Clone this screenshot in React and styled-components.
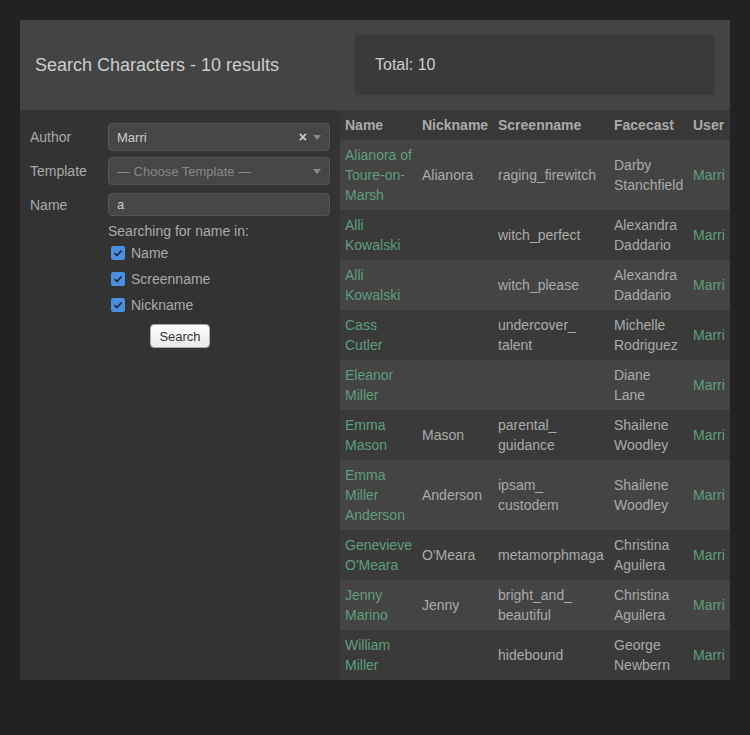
import React from 'react';
import styled, { createGlobalStyle } from 'styled-components';

const GlobalStyle = createGlobalStyle`
  body {
    margin: 0;
    background-color: #222;
    font-family: 'Liberation Sans', Arial, sans-serif;
  }
`;

const characters = [
  { name: 'Alianora of Toure-on-Marsh', nick: 'Alianora', screen: 'raging_firewitch', face: 'Darby Stanchfield' },
  { name: 'Alli Kowalski', nick: '', screen: 'witch_perfect', face: 'Alexandra Daddario' },
  { name: 'Alli Kowalski', nick: '', screen: 'witch_please', face: 'Alexandra Daddario' },
  { name: 'Cass Cutler', nick: '', screen: 'undercover_ talent', face: 'Michelle Rodriguez' },
  { name: 'Eleanor Miller', nick: '', screen: '', face: 'Diane Lane' },
  { name: 'Emma Mason', nick: 'Mason', screen: 'parental_ guidance', face: 'Shailene Woodley' },
  { name: 'Emma Miller Anderson', nick: 'Anderson', screen: 'ipsam_ custodem', face: 'Shailene Woodley' },
  { name: 'Genevieve O\'Meara', nick: 'O\'Meara', screen: 'metamorphmaga', face: 'Christina Aguilera' },
  { name: 'Jenny Marino', nick: 'Jenny', screen: 'bright_and_ beautiful', face: 'Christina Aguilera' },
  { name: 'William Miller', nick: '', screen: 'hidebound', face: 'George Newbern' },
];

const CheckIcon = () => (
  <svg width='10' height='10' viewBox='0 0 10 10'>
    <path d='M1.5 5.2 L4 7.5 L8.5 2.5' fill='none' stroke='#1f2a3a' strokeWidth='1.8' />
  </svg>
);

const App = () => {
  return (
    <>
      <GlobalStyle />
      <Page>
        <Header>
          <Title>Search Characters - 10 results</Title>
          <TotalBox>Total: 10</TotalBox>
        </Header>
        <Body>
          <Sidebar>
            <FormRow>
              <Label>Author</Label>
              <Select>
                <span>Marri</span>
                <SelectIcons>
                  <Clear>×</Clear>
                  <Arrow />
                </SelectIcons>
              </Select>
            </FormRow>
            <FormRow>
              <Label>Template</Label>
              <Select placeholder>
                <span>— Choose Template —</span>
                <SelectIcons>
                  <Arrow />
                </SelectIcons>
              </Select>
            </FormRow>
            <FormRow>
              <Label>Name</Label>
              <Input>a</Input>
            </FormRow>
            <Options>
              <Hint>Searching for name in:</Hint>
              {['Name', 'Screenname', 'Nickname'].map((opt) => (
                <CheckRow key={opt}>
                  <Check>
                    <CheckIcon />
                  </Check>
                  {opt}
                </CheckRow>
              ))}
            </Options>
            <ButtonRow>
              <Button>Search</Button>
            </ButtonRow>
          </Sidebar>
          <Table>
            <colgroup>
              <col style={{ width: 77 }} />
              <col style={{ width: 76 }} />
              <col style={{ width: 116 }} />
              <col style={{ width: 79 }} />
              <col style={{ width: 42 }} />
            </colgroup>
            <thead>
              <tr>
                <Th>Name</Th>
                <Th>Nickname</Th>
                <Th>Screenname</Th>
                <Th>Facecast</Th>
                <Th>User</Th>
              </tr>
            </thead>
            <tbody>
              {characters.map((c, i) => (
                <Row key={i} odd={i % 2 === 0}>
                  <Td link>{c.name}</Td>
                  <Td>{c.nick}</Td>
                  <Td>{c.screen}</Td>
                  <Td>{c.face}</Td>
                  <Td link>Marri</Td>
                </Row>
              ))}
            </tbody>
          </Table>
        </Body>
      </Page>
    </>
  );
};

const Page = styled.div`
  width: 710px;
  margin: 20px;
  background-color: #333;
`;

const Header = styled.div`
  display: flex;
  align-items: center;
  justify-content: space-between;
  height: 90px;
  padding: 0 15px;
  background-color: #444;
`;

const Title = styled.h1`
  margin: 0;
  font-size: 18px;
  font-weight: 400;
  color: #ccc;
`;

const TotalBox = styled.div`
  box-sizing: border-box;
  width: 360px;
  height: 60px;
  display: flex;
  align-items: center;
  padding: 0 20px;
  background-color: #3a3a3a;
  color: #ccc;
  font-size: 16px;
`;

const Body = styled.div`
  display: flex;
  align-items: flex-start;
`;

const Sidebar = styled.div`
  box-sizing: border-box;
  width: 320px;
  padding: 13px 10px 0 10px;
  align-self: stretch;
  background-color: #333;
`;

const FormRow = styled.div`
  display: flex;
  align-items: center;
  margin-bottom: 6px;
  &:nth-child(2) {
    margin-bottom: 8px;
  }
`;

const Label = styled.div`
  width: 78px;
  font-size: 14px;
  color: #aaa;
`;

const Select = styled.div`
  box-sizing: border-box;
  flex: 1;
  height: 28px;
  display: flex;
  align-items: center;
  justify-content: space-between;
  padding: 0 8px;
  border: 1px solid #555;
  border-radius: 4px;
  background-color: #464646;
  font-size: 13px;
  color: ${(props) => (props.placeholder ? '#888' : '#ccc')};
`;

const SelectIcons = styled.div`
  display: flex;
  align-items: center;
  gap: 6px;
`;

const Clear = styled.span`
  font-size: 14px;
  font-weight: 700;
  color: #ccc;
  line-height: 1;
`;

const Arrow = styled.span`
  width: 0;
  height: 0;
  border-left: 4px solid transparent;
  border-right: 4px solid transparent;
  border-top: 5px solid #888;
`;

const Input = styled.div`
  box-sizing: border-box;
  flex: 1;
  height: 23px;
  display: flex;
  align-items: center;
  padding: 0 8px;
  border: 1px solid #555;
  border-radius: 4px;
  background-color: #464646;
  font-size: 13px;
  color: #ccc;
`;

const Options = styled.div`
  margin-left: 78px;
  margin-top: 7px;
`;

const Hint = styled.div`
  font-size: 14px;
  color: #aaa;
  line-height: 16px;
  margin-bottom: 1px;
`;

const CheckRow = styled.div`
  display: flex;
  align-items: center;
  gap: 6px;
  height: 26px;
  padding-left: 3px;
  font-size: 14px;
  color: #aaa;
`;

const Check = styled.span`
  width: 14px;
  height: 14px;
  border-radius: 2px;
  background-color: #4a8fe0;
  display: flex;
  align-items: center;
  justify-content: center;
`;

const ButtonRow = styled.div`
  display: flex;
  justify-content: center;
  margin-top: 6px;
`;

const Button = styled.button`
  width: 60px;
  height: 24px;
  padding: 0;
  border: 1px solid #aaa;
  border-radius: 4px;
  background: linear-gradient(#fff, #e8e8e8);
  font-family: 'Liberation Sans', Arial, sans-serif;
  font-size: 13px;
  color: #333;
`;

const Table = styled.table`
  width: 390px;
  table-layout: fixed;
  border-collapse: collapse;
  font-size: 14px;
  line-height: 20px;
`;

const Th = styled.th`
  height: 30px;
  padding: 0 5px;
  text-align: left;
  font-weight: 700;
  color: #aaa;
  background-color: #383838;
  white-space: nowrap;
`;

const Row = styled.tr`
  background-color: ${(props) => (props.odd ? '#444' : '#3a3a3a')};
`;

const Td = styled.td`
  padding: 5px;
  vertical-align: middle;
  color: ${(props) => (props.link ? '#5f9e7c' : '#aaa')};
  overflow: hidden;
`;

export default App;
